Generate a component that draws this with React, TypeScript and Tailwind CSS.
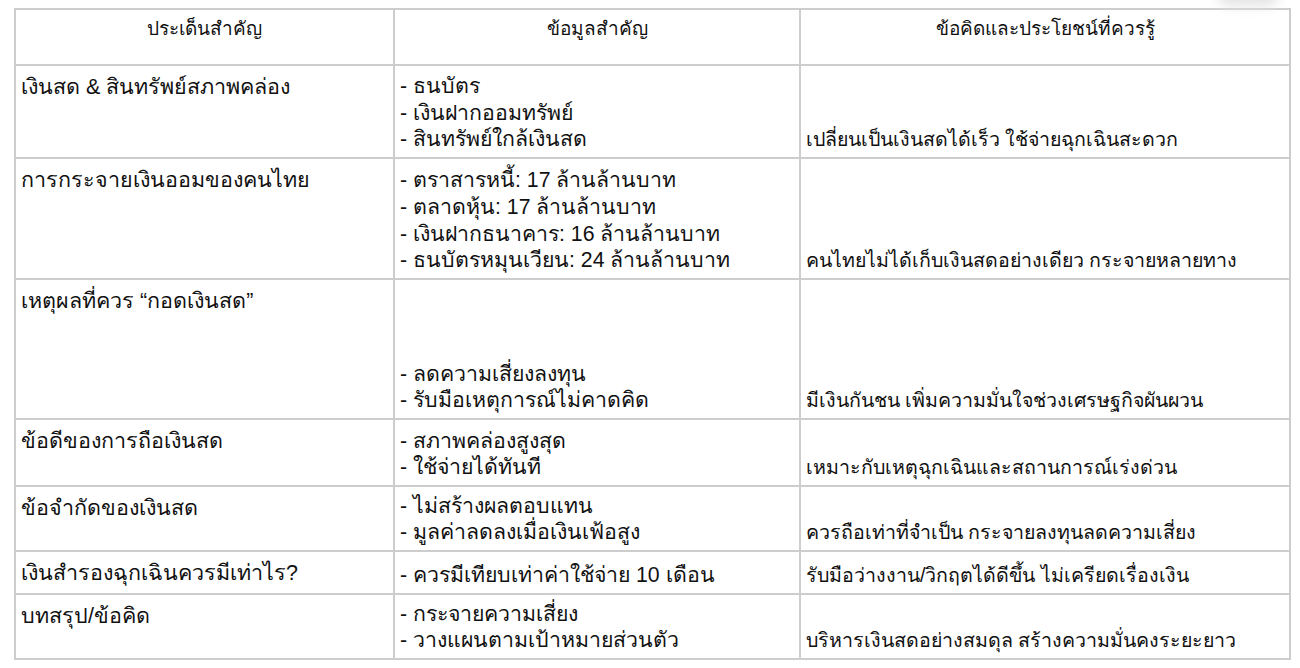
const rows = [
  {
    topic: 'เงินสด & สินทรัพย์สภาพคล่อง',
    facts: ['- ธนบัตร', '- เงินฝากออมทรัพย์', '- สินทรัพย์ใกล้เงินสด'],
    note: 'เปลี่ยนเป็นเงินสดได้เร็ว ใช้จ่ายฉุกเฉินสะดวก',
    h: 'h-[93px]',
  },
  {
    topic: 'การกระจายเงินออมของคนไทย',
    facts: [
      '- ตราสารหนี้: 17 ล้านล้านบาท',
      '- ตลาดหุ้น: 17 ล้านล้านบาท',
      '- เงินฝากธนาคาร: 16 ล้านล้านบาท',
      '- ธนบัตรหมุนเวียน: 24 ล้านล้านบาท',
    ],
    note: 'คนไทยไม่ได้เก็บเงินสดอย่างเดียว กระจายหลายทาง',
    h: 'h-[121px]',
  },
  {
    topic: 'เหตุผลที่ควร “กอดเงินสด”',
    facts: ['- ลดความเสี่ยงลงทุน', '- รับมือเหตุการณ์ไม่คาดคิด'],
    note: 'มีเงินกันชน เพิ่มความมั่นใจช่วงเศรษฐกิจผันผวน',
    h: 'h-[140px]',
  },
  {
    topic: 'ข้อดีของการถือเงินสด',
    facts: ['- สภาพคล่องสูงสุด', '- ใช้จ่ายได้ทันที'],
    note: 'เหมาะกับเหตุฉุกเฉินและสถานการณ์เร่งด่วน',
    h: 'h-[67px]',
  },
  {
    topic: 'ข้อจำกัดของเงินสด',
    facts: ['- ไม่สร้างผลตอบแทน', '- มูลค่าลดลงเมื่อเงินเฟ้อสูง'],
    note: 'ควรถือเท่าที่จำเป็น กระจายลงทุนลดความเสี่ยง',
    h: 'h-[65px]',
  },
  {
    topic: 'เงินสำรองฉุกเฉินควรมีเท่าไร?',
    facts: ['- ควรมีเทียบเท่าค่าใช้จ่าย 10 เดือน'],
    note: 'รับมือว่างงาน/วิกฤตได้ดีขึ้น ไม่เครียดเรื่องเงิน',
    h: 'h-[43px]',
  },
  {
    topic: 'บทสรุป/ข้อคิด',
    facts: ['- กระจายความเสี่ยง', '- วางแผนตามเป้าหมายส่วนตัว'],
    note: 'บริหารเงินสดอย่างสมดุล สร้างความมั่นคงระยะยาว',
    h: 'h-[65px]',
  },
];

const cell = 'border-2 border-[#cdcdcd] px-[5px]';

export default function App() {
  return (
    <div className="relative h-[668px] w-[1300px] overflow-hidden bg-white pl-[14px] pt-[8px] font-['Liberation_Sans','Noto_Sans',sans-serif] leading-[26.7px] text-[#111]">
      <div className="absolute -top-[14px] right-[22px] h-[20px] w-[60px] rounded-full bg-[#e4e4e4] blur-[6px]" />
      <table className="w-[1275px] table-fixed border-collapse">
        <colgroup>
          <col className="w-[379px]" />
          <col className="w-[406px]" />
          <col className="w-[490px]" />
        </colgroup>
        <thead>
          <tr className="h-[56px]">
            {['ประเด็นสำคัญ', 'ข้อมูลสำคัญ', 'ข้อคิดและประโยชน์ที่ควรรู้'].map((t) => (
              <th
                key={t}
                className={`${cell} pt-[6px] text-center align-top text-[19px] font-normal leading-[26px]`}
              >
                {t}
              </th>
            ))}
          </tr>
        </thead>
        <tbody>
          {rows.map((r) => (
            <tr key={r.topic} className={r.h}>
              <td className={`${cell} pt-[8px] align-top text-[21.5px]`}>{r.topic}</td>
              <td className={`${cell} pb-[4px] align-bottom text-[21.3px]`}>
                {r.facts.map((f) => (
                  <div key={f}>{f}</div>
                ))}
              </td>
              <td className={`${cell} pb-[4px] align-bottom text-[19.6px]`}>{r.note}</td>
            </tr>
          ))}
        </tbody>
      </table>
    </div>
  );
}
